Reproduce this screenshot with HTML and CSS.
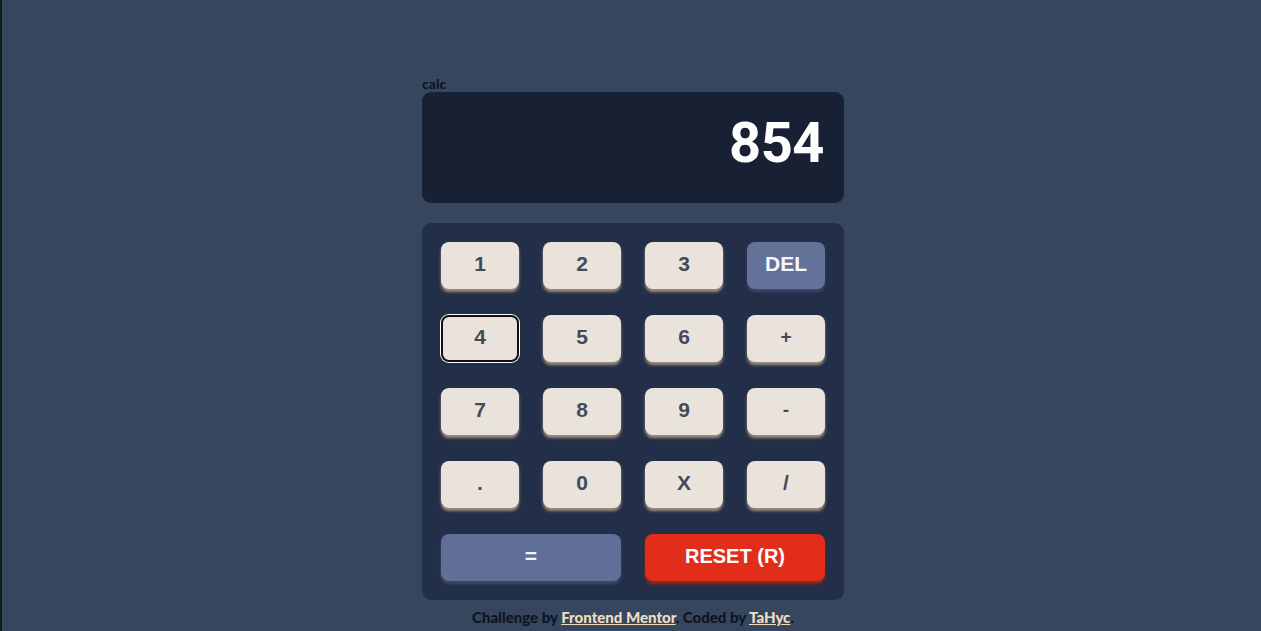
FILE: index.html
```html
<!DOCTYPE html>
<html lang="en">
<head>
<meta charset="utf-8">
<title>calc</title>
<link rel="stylesheet" href="styles.css">
</head>
<body>
<main class="calc">
  <h1 class="title">calc</h1>
  <div class="screen"><span class="value">854</span></div>
  <div class="keypad">
    <button class="key">1</button>
    <button class="key">2</button>
    <button class="key">3</button>
    <button class="key key-del">DEL</button>
    <button class="key key-focus">4</button>
    <button class="key">5</button>
    <button class="key">6</button>
    <button class="key key-op">+</button>
    <button class="key">7</button>
    <button class="key">8</button>
    <button class="key">9</button>
    <button class="key key-op">-</button>
    <button class="key">.</button>
    <button class="key">0</button>
    <button class="key">X</button>
    <button class="key">/</button>
    <button class="key key-eq">=</button>
    <button class="key key-reset">RESET (R)</button>
  </div>
  <footer class="attribution">Challenge by <a href="#">Frontend Mentor</a>. Coded by <a href="#">TaHyc</a>.</footer>
</main>
</body>
</html>
```

FILE: styles.css
```css
html, body {
  margin: 0;
  padding: 0;
}

body {
  min-height: 100vh;
  box-sizing: border-box;
  background: #36465f;
  border-left: 2px solid #0f1d1f;
  padding: 76px 0 0 3px;
  display: flex;
  flex-direction: column;
  align-items: center;
  font-family: "Lato", "Noto Sans", sans-serif;
}

.calc {
  width: 422px;
  display: flex;
  flex-direction: column;
}

.title {
  margin: 0;
  font-size: 14px;
  line-height: 16px;
  font-weight: 900;
  color: #0e1422;
}

.screen {
  height: 111px;
  box-sizing: border-box;
  background: #182034;
  border-radius: 9px;
  display: flex;
  align-items: center;
  justify-content: flex-end;
  padding: 0 20px 10px 20px;
}

.value {
  font-family: "Roboto", "Liberation Sans", sans-serif;
  font-weight: 700;
  font-size: 56px;
  color: #ffffff;
  letter-spacing: -0.5px;
}

.keypad {
  margin-top: 20px;
  background: #232e48;
  border-radius: 9px;
  padding: 19px 18px 19px 19px;
  display: grid;
  grid-template-columns: repeat(4, 78px);
  grid-auto-rows: 47px;
  column-gap: 24px;
  row-gap: 26px;
}

.key {
  border: none;
  border-radius: 8px;
  background: #eae3dc;
  color: #434a59;
  font-family: "Liberation Sans", Arial, sans-serif;
  font-weight: 700;
  font-size: 21px;
  line-height: 1;
  box-shadow: 0 3px 3px #9e8e7e;
  padding: 0 0 4px 0;
  cursor: pointer;
}

.key-op {
  font-size: 19px;
}

.key-focus {
  box-shadow: inset 0 0 0 2px #111111, 0 0 0 1px #ffffff;
}

.key-del {
  background: #647198;
  color: #f4f8ff;
  font-size: 21px;
  box-shadow: 0 3px 3px #3d4866;
}

.key-eq {
  grid-column: span 2;
  background: #5f6f98;
  color: #f0f4ff;
  box-shadow: 0 3px 3px #3e4a6a;
}

.key-reset {
  grid-column: span 2;
  background: #e22d1a;
  color: #ffffff;
  font-size: 20px;
  box-shadow: 0 3px 3px #92291d;
}

.attribution {
  margin-top: 7px;
  text-align: center;
  font-size: 15px;
  line-height: 20px;
  font-weight: 900;
  color: #0e1422;
}

.attribution a {
  color: #f3dcc0;
  text-decoration: underline;
}
```
